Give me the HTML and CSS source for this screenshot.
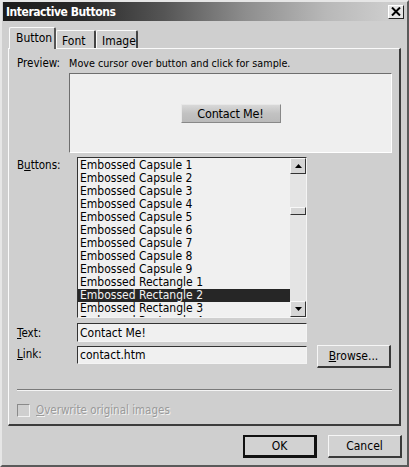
FILE: index.html
```html
<!DOCTYPE html>
<html>
<head>
<meta charset="utf-8">
<link rel="stylesheet" href="styles.css">
</head>
<body>
<div class="window">
  <div class="titlebar">
    <span class="title">Interactive Buttons</span>
    <span class="close"><svg width="10" height="9" viewBox="0 0 10 9"><path d="M1 0.5 L9 8.5 M9 0.5 L1 8.5" stroke="#000" stroke-width="2"/></svg></span>
  </div>
  <div class="tabs">
    <div class="tab active">Button</div>
    <div class="tab tab-font">Font</div>
    <div class="tab tab-image">Image</div>
  </div>
  <div class="panel">
    <div class="preview-head"><span class="lbl-preview">Preview:</span><span class="preview-note">Move cursor over button and click for sample.</span></div>
    <div class="preview-box"><div class="sample-btn">Contact Me!</div></div>
    <div class="form-grid">
      <div class="lbl lbl-list">B<u>u</u>ttons:</div>
      <div class="listbox">
        <div class="items">
          <div class="item">Embossed Capsule 1</div>
          <div class="item">Embossed Capsule 2</div>
          <div class="item">Embossed Capsule 3</div>
          <div class="item">Embossed Capsule 4</div>
          <div class="item">Embossed Capsule 5</div>
          <div class="item">Embossed Capsule 6</div>
          <div class="item">Embossed Capsule 7</div>
          <div class="item">Embossed Capsule 8</div>
          <div class="item">Embossed Capsule 9</div>
          <div class="item">Embossed Rectangle 1</div>
          <div class="item selected">Embossed Rectangle 2</div>
          <div class="item">Embossed Rectangle 3</div>
          <div class="item">Embossed Rectangle 4</div>
        </div>
        <div class="scrollbar">
          <div class="sb-btn"><svg width="7" height="4" viewBox="0 0 7 4"><path d="M3.5 0 L7 4 L0 4 Z" fill="#000"/></svg></div>
          <div class="sb-track"><div class="sb-thumb"></div></div>
          <div class="sb-btn"><svg width="7" height="4" viewBox="0 0 7 4"><path d="M0 0 L7 0 L3.5 4 Z" fill="#000"/></svg></div>
        </div>
      </div>

      <div class="lbl lbl-text"><u>T</u>ext:</div>
      <div class="input text-input">Contact Me!</div>

      <div class="lbl lbl-link"><u>L</u>ink:</div>
      <div class="input link-input">contact.htm</div>
      <div class="btn browse"><span><u>B</u>rowse...</span></div>
    </div>
    <div class="separator"></div>
    <div class="check-row">
      <span class="checkbox"></span>
      <span class="check-label"><u>O</u>verwrite original images</span>
    </div>
  </div>
  <div class="footer">
    <div class="btn ok default">OK</div>
    <div class="btn cancel">Cancel</div>
  </div>
</div>
</body>
</html>
```

FILE: styles.css
```css
html, body {
  margin: 0;
  padding: 0;
  background: #cfcfcf;
}
body {
  font-family: "DejaVu Sans Condensed", "DejaVu Sans", sans-serif;
  font-stretch: condensed;
  font-size: 11px;
  color: #000;
}
.window {
  width: 409px;
  height: 467px;
  box-sizing: border-box;
  background: #cfcfcf;
  border-top: 2px solid #e6e6e6;
  border-left: 2px solid #e6e6e6;
  border-right: 2px solid #5a5a5a;
  border-bottom: 2px solid #5a5a5a;
  display: flex;
  flex-direction: column;
  overflow: hidden;
}
.titlebar {
  height: 19px;
  margin: 0 1px;
  background: linear-gradient(to right, #1c1c1c 0%, #2a2a2a 20%, #555 40%, #8d8d8d 60%, #b8b8b8 80%, #cccccc 95%);
  display: flex;
  align-items: center;
  justify-content: space-between;
  padding: 0 2px 0 3px;
}
.title {
  color: #fff;
  font-weight: bold;
  font-size: 12px;
  letter-spacing: -0.45px;
}
.close {
  width: 16px;
  height: 14px;
  box-sizing: border-box;
  background: #e4e4e4;
  border-top: 1px solid #fff;
  border-left: 1px solid #fff;
  border-right: 1px solid #222;
  border-bottom: 1px solid #222;
  display: flex;
  align-items: center;
  justify-content: center;
}
.tabs {
  display: flex;
  align-items: flex-end;
  margin: 6px 0 0 7px;
  height: 21px;
  position: relative;
  z-index: 1;
}
.tab {
  height: 18px;
  box-sizing: border-box;
  padding: 3px 0 0 5px;
  border-top: 1px solid #fafafa;
  border-left: 1px solid #fafafa;
  border-right: 2px solid #444;
  border-radius: 2px 2px 0 0;
  font-size: 12px;
  white-space: nowrap;
}
.tab.active {
  width: 47px;
  height: 22px;
  margin-bottom: -1px;
  padding: 3px 0 0 6px;
  background: #cfcfcf;
  border-right: 2px solid #555;
}
.tab-font { width: 40px; }
.tab-image { width: 42px; }
.panel {
  margin: 0 6px 0 6px;
  height: 378px;
  box-sizing: border-box;
  border-top: 1px solid #fafafa;
  border-left: 1px solid #fafafa;
  border-right: 2px solid #3c3c3c;
  border-bottom: 2px solid #3c3c3c;
  padding: 6px 7px 0 8px;
  display: flex;
  flex-direction: column;
  font-size: 11.5px;
}
.preview-head {
  display: flex;
  gap: 9px;
  height: 16px;
  align-items: center;
}
.preview-note {
  font-size: 10.7px;
}
.preview-box {
  margin: 2px 0 0 52px;
  height: 80px;
  box-sizing: border-box;
  background: #efefef;
  border-top: 1px solid #6e6e6e;
  border-left: 1px solid #6e6e6e;
  border-right: 1px solid #fff;
  border-bottom: 1px solid #fff;
  display: flex;
  align-items: center;
  justify-content: center;
}
.sample-btn {
  width: 100px;
  height: 19px;
  box-sizing: border-box;
  background: linear-gradient(to bottom, #d8d8d8 0%, #c2c2c2 50%, #bababa 100%);
  border-top: 1px solid #e8e8e8;
  border-left: 1px solid #e8e8e8;
  border-right: 1px solid #888;
  border-bottom: 1px solid #888;
  display: flex;
  align-items: center;
  justify-content: center;
  font-size: 12.5px;
  letter-spacing: -0.2px;
}
.form-grid {
  display: grid;
  grid-template-columns: 60px 230px 10px 74px;
  grid-template-rows: 161px 20px 18px;
  row-gap: 4px;
  margin-top: 4px;
}
.lbl {
  grid-column: 1;
  padding-top: 3px;
}
.lbl-list { grid-row: 1; padding-top: 1px; }
.lbl-text { grid-row: 2; padding-top: 4px; }
.lbl-link { grid-row: 3; padding-top: 1px; }
.listbox {
  grid-column: 2;
  grid-row: 1;
  display: flex;
  box-sizing: border-box;
  border-top: 1px solid #333;
  border-left: 1px solid #333;
  border-right: 1px solid #f4f4f4;
  border-bottom: 1px solid #f4f4f4;
  background: #f0f0f0;
  overflow: hidden;
  font-size: 12px;
}
.items {
  flex: 1;
  padding-top: 1px;
  overflow: hidden;
}
.item {
  height: 13px;
  line-height: 13px;
  padding-left: 2px;
  white-space: nowrap;
}
.item.selected {
  background: #262626;
  color: #f2f2f2;
}
.scrollbar {
  width: 16px;
  display: flex;
  flex-direction: column;
  background: #e2e2e2;
}
.sb-btn {
  height: 16px;
  box-sizing: border-box;
  background: #d6d6d6;
  border-top: 1px solid #f8f8f8;
  border-left: 1px solid #f8f8f8;
  border-right: 1px solid #333;
  border-bottom: 1px solid #333;
  display: flex;
  align-items: center;
  justify-content: center;
}
.sb-track {
  flex: 1;
  background: #e4e4e4;
  padding-top: 33px;
}
.sb-thumb {
  height: 8px;
  box-sizing: border-box;
  background: #d6d6d6;
  border-top: 1px solid #f8f8f8;
  border-left: 1px solid #f8f8f8;
  border-right: 1px solid #333;
  border-bottom: 1px solid #333;
}
.input {
  grid-column: 2;
  box-sizing: border-box;
  height: 19px;
  background: #f0f0f0;
  border-top: 1px solid #333;
  border-left: 1px solid #333;
  border-right: 1px solid #f4f4f4;
  border-bottom: 1px solid #f4f4f4;
  padding: 2px 0 0 2px;
  white-space: nowrap;
  font-size: 12px;
}
.text-input { grid-row: 2; align-self: end; }
.link-input { grid-row: 3; height: 18px; padding-top: 1px; }
.btn {
  box-sizing: border-box;
  background: #d2d2d2;
  border-top: 1px solid #f6f6f6;
  border-left: 1px solid #f6f6f6;
  border-right: 2px solid #3a3a3a;
  border-bottom: 2px solid #3a3a3a;
  display: flex;
  align-items: center;
  justify-content: center;
  font-size: 12px;
}
.browse {
  grid-column: 4;
  grid-row: 3;
  height: 23px;
  margin-top: -1px;
}
.separator {
  margin-top: 25px;
  height: 0;
  border-top: 1px solid #7a7a7a;
  border-bottom: 1px solid #f4f4f4;
}
.check-row {
  display: flex;
  align-items: center;
  gap: 6px;
  margin-top: 12px;
  color: #9a9a9a;
}
.checkbox {
  width: 13px;
  height: 13px;
  box-sizing: border-box;
  border-top: 1px solid #8a8a8a;
  border-left: 1px solid #8a8a8a;
  border-right: 1px solid #f2f2f2;
  border-bottom: 1px solid #f2f2f2;
  background: #cfcfcf;
}
.check-label {
  text-shadow: 1px 1px 0 #f2f2f2;
}
.footer {
  display: flex;
  justify-content: flex-end;
  gap: 11px;
  margin: 9px 5px 0 0;
}
.footer .btn {
  width: 74px;
  height: 23px;
}
.btn.default {
  border: 2px solid #111;
  border-right-width: 3px;
  border-bottom-width: 3px;
}
```
